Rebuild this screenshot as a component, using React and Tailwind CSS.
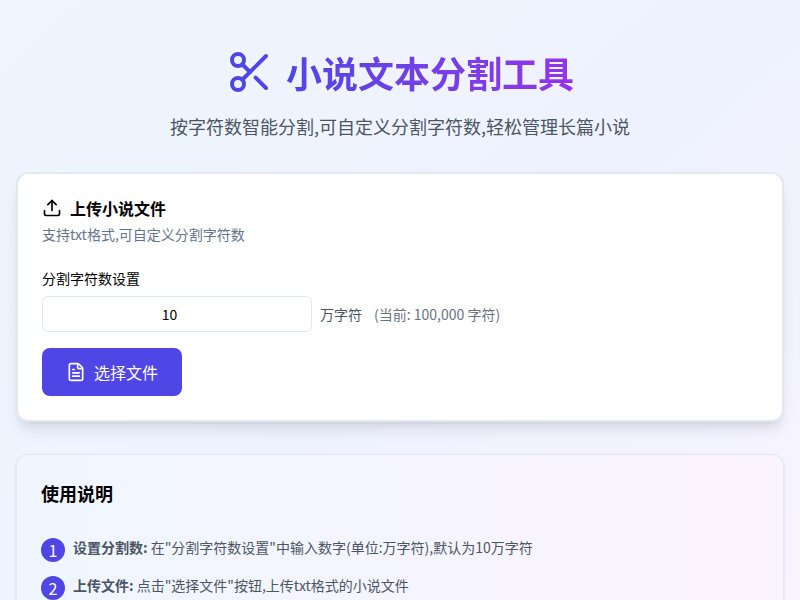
import { Scissors, Upload, FileText } from "lucide-react";

const font = "font-['Noto_Sans_CJK_SC','Noto_Sans',sans-serif]";

const steps = [
  ["设置分割数:", '在"分割字符数设置"中输入数字(单位:万字符),默认为10万字符'],
  ["上传文件:", '点击"选择文件"按钮,上传txt格式的小说文件'],
  ["开始分割:", "系统会按设定的字符数自动分割文件"],
  ["下载结果:", "分割完成后可下载全部分割文件"],
];

export default function App() {
  return (
    <div className={`min-h-screen bg-gradient-to-br from-[#eff6ff] via-[#eef2ff] to-[#faf5ff] px-4 py-8 ${font}`}>
      <div className="mx-auto max-w-3xl">
        <header className="mb-8 text-center">
          <h1 className="mt-4 mb-4 flex h-[48px] items-center justify-center gap-3 text-4xl font-bold">
            <Scissors className="h-12 w-12 text-[#4f46e5]" />
            <span className="bg-gradient-to-r from-[#4f46e5] to-[#9333ea] bg-clip-text text-transparent">
              小说文本分割工具
            </span>
          </h1>
          <p className="text-lg text-[#4b5563]">按字符数智能分割,可自定义分割字符数,轻松管理长篇小说</p>
        </header>

        <section className="mb-8 rounded-xl border-2 border-[#e2e8f0] bg-white px-6 pt-[22px] pb-6 shadow-lg">
          <h2 className="flex h-6 items-center gap-2 font-semibold text-black">
            <Upload className="h-5 w-5" />
            上传小说文件
          </h2>
          <p className="mt-1 text-sm text-[#64748b]">支持txt格式,可自定义分割字符数</p>

          <label className="mt-6 block text-sm text-black">分割字符数设置</label>
          <div className="mt-2 flex items-center gap-2">
            <input
              type="number"
              defaultValue={10}
              className="h-9 w-[270px] rounded-md border border-[#e2e8f0] bg-white text-center text-sm text-black"
            />
            <span className="text-sm text-[#4b5563]">万字符</span>
            <span className="ml-1 text-sm text-[#6b7280]">(当前: 100,000 字符)</span>
          </div>

          <button className="mt-4 flex h-12 w-[140px] items-center justify-center gap-2 rounded-lg bg-[#4f46e5] text-base text-white">
            <FileText className="h-5 w-5" />
            选择文件
          </button>
        </section>

        <section className="rounded-xl border border-[#e2e8f0] bg-gradient-to-r from-[#eff6ff] to-[#fbf3fe] p-6 shadow-sm">
          <h3 className="text-lg font-semibold text-black">使用说明</h3>
          <ol className="mt-[30px] flex flex-col gap-[13px]">
            {steps.map(([title, text], i) => (
              <li key={title} className="flex gap-2 text-sm text-[#4b5563]">
                <span className="mt-px flex h-6 w-6 shrink-0 items-center justify-center rounded-full bg-[#4f46e5] text-base text-white">
                  {i + 1}
                </span>
                <span>
                  <strong className="font-semibold">{title}</strong> {text}
                </span>
              </li>
            ))}
          </ol>
        </section>
      </div>
    </div>
  );
}
